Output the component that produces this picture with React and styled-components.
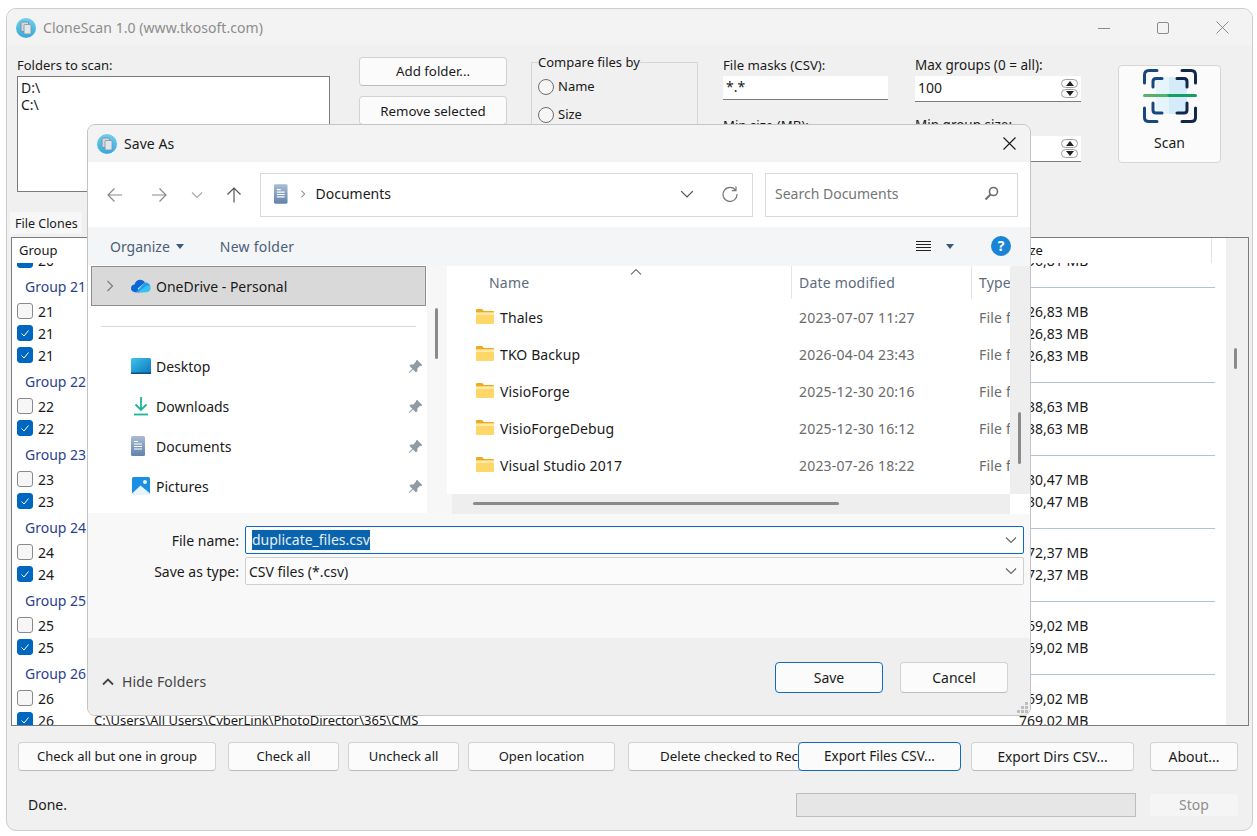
import React from 'react';
import styled, { createGlobalStyle } from 'styled-components';

const FONT = '"Noto Sans", "Open Sans", sans-serif';

const Global = createGlobalStyle`
  html, body { margin: 0; padding: 0; background: #fff; }
  body { font-family: ${FONT}; font-size: 14px; color: #1a1a1a; }
  * { box-sizing: border-box; }
`;

const Win = styled.div`
  position: relative;
  width: 1247px;
  height: 823px;
  margin: 8px 0 0 6px;
  border: 1px solid #cdcdcd;
  border-radius: 10px;
  background: #f0f0f0;
  overflow: hidden;
`;

const TitleBar = styled.div`
  display: flex;
  align-items: center;
  height: 37px;
  padding-left: 9px;
  background: #f3f3f3;
`;

const TitleText = styled.span`
  margin-left: 7px;
  letter-spacing: 0.06px;
  color: ${(p) => (p.$active ? '#1a1a1a' : '#8c8c8c')};
`;

const WinControls = styled.div`
  display: flex;
  align-items: center;
  margin-left: auto;
  padding-right: 23px;
  gap: 47px;
  color: #8a8a8a;
`;

const ConfigRow = styled.div`
  display: flex;
  align-items: flex-start;
  height: 166px;
  padding-left: 10px;
`;

const Column = styled.div`
  display: flex;
  flex-direction: column;
  width: ${(p) => p.$w}px;
  margin-left: ${(p) => p.$ml || 0}px;
  padding-top: 11px;
`;

const Label = styled.div`
  font-size: ${(p) => p.$fs || 13.2}px;
  line-height: 17px;
  height: 19px;
  white-space: nowrap;
`;

const FolderBox = styled.div`
  height: 116px;
  padding: 2px 3px;
  border: 1px solid #7c7c7c;
  background: #fff;
  line-height: 17px;
`;

const PushButton = styled.button`
  display: block;
  flex: none;
  width: ${(p) => p.$w}px;
  height: ${(p) => p.$h || 29}px;
  margin-left: ${(p) => p.$ml || 0}px;
  padding: 0 0 ${(p) => (p.$flush ? 0 : 1)}px;
  border: 1px solid ${(p) => (p.$focus ? '#0f6cbd' : '#d2d2d2')};
  border-bottom-color: ${(p) => (p.$focus ? '#0f6cbd' : '#bcbcbc')};
  border-radius: 4px;
  background: #fbfbfb;
  color: #1a1a1a;
  font-family: ${FONT};
  font-size: ${(p) => p.$fs || 13}px;
  white-space: nowrap;
  overflow: hidden;
  position: relative;
  z-index: ${(p) => (p.$focus ? 1 : 0)};
`;

const ButtonStack = styled(Column)`
  gap: 10px;
`;

const GroupBox = styled.fieldset`
  width: 167px;
  height: 136px;
  margin: 8px 0 0 24px;
  padding: 0 6px;
  border: 1px solid #d6d6d6;
  display: flex;
  flex-direction: column;
  gap: 10px;
  min-inline-size: 0;
  font-size: 13px;
  legend {
    padding: 0;
    line-height: 17px;
  }
`;

const RadioRow = styled.div`
  display: flex;
  align-items: center;
  gap: 4px;
  height: 18px;
  line-height: 16px;
  margin-top: ${(p) => p.$mt || 0}px;
`;

const RadioText = styled.span`
  margin-bottom: 2px;
`;

const Radio = styled.span`
  width: 16px;
  height: 16px;
  border-radius: 50%;
  border: 1px solid #6e6e6e;
  background: #f6f6f6;
`;

const MaskInput = styled.div`
  display: flex;
  align-items: center;
  justify-content: space-between;
  height: ${(p) => p.$h}px;
  padding: 0 3px 0 3px;
  background: #fff;
  border-bottom: 1px solid #7c7c7c;
  margin-bottom: ${(p) => p.$mb}px;
`;

const MaskValue = styled.span`
  margin-bottom: 2px;
`;

const Spin = styled.div`
  display: flex;
  flex-direction: column;
  gap: 1px;
`;

const SpinPart = styled.span`
  display: flex;
  align-items: center;
  justify-content: center;
  width: 17px;
  height: 9px;
  border: 1px solid #a0a0a0;
  border-radius: 5px;
  background: #fbfbfb;
`;

const ScanButton = styled.div`
  display: flex;
  flex-direction: column;
  align-items: center;
  width: 103px;
  height: 98px;
  margin: 19px 0 0 37px;
  padding-top: 3px;
  border: 1px solid #d6d6d6;
  border-radius: 4px;
  background: #fbfbfb;
  span {
    margin-top: 10px;
    line-height: 20px;
  }
`;

const TabBar = styled.div`
  height: 25px;
  padding-left: 3px;
`;

const Tab = styled.div`
  width: 72px;
  height: 22px;
  padding-left: 5px;
  font-size: 12.5px;
  line-height: 23px;
  background: #f7f7f7;
  white-space: nowrap;
`;

const ListFrame = styled.div`
  display: flex;
  width: 1238px;
  height: 489px;
  margin-left: 4px;
  border: 1px solid #7c7c7c;
  background: #fff;
`;

const ListMain = styled.div`
  flex: 1;
  display: flex;
  flex-direction: column;
  min-width: 0;
`;

const ListHead = styled.div`
  display: grid;
  grid-template-columns: 82px 925px 193px;
  flex: none;
  height: 25px;
  background: #fff;
  font-size: 13px;
  line-height: 25px;
  padding-top: 0;
`;

const HeadCell = styled.div`
  padding-left: ${(p) => p.$pl || 0}px;
  border-right: ${(p) => (p.$sep ? '1px solid #e4e4e4' : 'none')};
  white-space: nowrap;
`;

const ListViewport = styled.div`
  flex: 1;
  overflow: hidden;
`;

const FileRow = styled.div`
  display: grid;
  grid-template-columns: 82px 925px 1fr;
  align-items: center;
  height: 22px;
  margin-top: ${(p) => p.$mt || 0}px;
  white-space: nowrap;
`;

const PathCell = styled.div`
  font-size: 13px;
`;

const CheckCell = styled.div`
  display: flex;
  align-items: center;
  gap: 5px;
  padding-left: 5px;
`;

const CheckBox = styled.span`
  display: flex;
  align-items: center;
  justify-content: center;
  width: 16px;
  height: 16px;
  border-radius: 3px;
  border: 1px solid ${(p) => (p.$on ? '#0067c0' : '#8a8a8a')};
  background: ${(p) => (p.$on ? '#0067c0' : '#f6f6f6')};
`;

const GroupRow = styled.div`
  display: flex;
  align-items: center;
  height: 29px;
  padding: 3px 11px 0 13px;
  gap: 8px;
  color: #2b3f8c;
  white-space: nowrap;
  &::after {
    content: '';
    flex: 1;
    height: 1px;
    background: #b2c5d8;
  }
`;

const GroupName = styled.span`
  margin-bottom: 1px;
`;

const ListScroll = styled.div`
  flex: none;
  width: 22px;
  padding: 110px 0 0 8px;
  background: #f0f0f0;
  &::after {
    content: '';
    display: block;
    width: 3px;
    height: 21px;
    border-radius: 2px;
    background: #8a8a8a;
  }
`;

const ActionRow = styled.div`
  display: flex;
  height: 29px;
  margin-top: 16px;
  padding-left: 11px;
`;

const StatusRow = styled.div`
  display: flex;
  align-items: center;
  height: 24px;
  margin-top: 22px;
  padding-left: 21px;
`;

const StatusText = styled.span`
  margin-bottom: 2px;
`;

const Progress = styled.div`
  width: 340px;
  height: 24px;
  margin-left: auto;
  border: 1px solid #bcbcbc;
  background: #e6e6e6;
`;

const StopButton = styled.div`
  width: 88px;
  height: 22px;
  margin: 0 14px 0 14px;
  line-height: 22px;
  text-align: center;
  border-radius: 3px;
  background: #f5f5f5;
  color: #8f8f8f;
`;

/* the Save As dialog floats over the main window */
const Dialog = styled.div`
  position: absolute;
  left: 80px;
  top: 115px;
  width: 944px;
  height: 592px;
  border: 1px solid #c4c4c4;
  border-radius: 8px;
  background: #f0f0f0;
  overflow: hidden;
`;

const DialogClose = styled.span`
  display: flex;
  margin-left: auto;
  padding-right: 14px;
  color: #1a1a1a;
`;

const NavBar = styled.div`
  display: flex;
  align-items: center;
  height: 65px;
  padding-left: 19px;
  background: #fff;
  color: #8a8a8a;
`;

const NavIcon = styled.span`
  display: flex;
  flex: none;
  width: ${(p) => p.$w}px;
  margin-left: ${(p) => p.$ml || 0}px;
  color: ${(p) => p.$c || 'inherit'};
`;

const PathBox = styled.div`
  display: flex;
  align-items: center;
  flex: none;
  width: ${(p) => p.$w}px;
  height: 44px;
  margin-left: ${(p) => p.$ml}px;
  padding: 0 ${(p) => p.$pr}px 2px ${(p) => p.$pl}px;
  border: 1px solid #d9d9d9;
  background: #fff;
  color: #1a1a1a;
`;

const Crumb = styled.span`
  margin-left: 9px;
`;

const SearchHint = styled.span`
  color: #757575;
  flex: 1;
`;

const ToolStrip = styled.div`
  display: flex;
  align-items: center;
  height: 38px;
  padding-left: 22px;
  background: #f3f5f7;
  color: #4b6078;
`;

const NewFolder = styled.span`
  flex: none;
  width: 80px;
  margin-left: 36px;
  letter-spacing: 0.25px;
`;

const BodyGrid = styled.div`
  display: grid;
  grid-template-columns: 339px 20px 583px;
  height: 248px;
  background: #f7f7f7;
`;

const TreePane = styled.div`
  background: #fff;
  overflow: hidden;
`;

const TreeSelected = styled.div`
  display: flex;
  align-items: center;
  width: 335px;
  height: 40px;
  margin: 1px 0 0 3px;
  padding-left: 12px;
  background: #d9d9d9;
  border: 1px solid #8f8f8f;
`;

const TreeRule = styled.div`
  width: 315px;
  height: 1px;
  margin: 20px 0 19px 13px;
  background: #d9d9d9;
`;

const TreeRow = styled.div`
  display: flex;
  align-items: center;
  height: 40px;
  padding: 0 4px 0 43px;
`;

const TreeText = styled.span`
  margin-left: 5px;
`;

const PinMark = styled.span`
  display: flex;
  margin-left: auto;
`;

const TreeScroll = styled.div`
  padding: 43px 0 0 8px;
  &::after {
    content: '';
    display: block;
    width: 3px;
    height: 51px;
    border-radius: 2px;
    background: #8a8a8a;
  }
`;

const FilesPane = styled.div`
  display: grid;
  grid-template-columns: 563px 20px;
  grid-template-rows: 228px 20px;
  margin-top: 1px;
  height: 247px;
`;

const FilesMain = styled.div`
  position: relative;
  background: #fff;
  overflow: hidden;
`;

const FileGrid = styled.div`
  display: grid;
  grid-template-columns: 345px 180px 38px;
  align-items: center;
  height: ${(p) => p.$h}px;
`;

const ColHead = styled.div`
  height: 33px;
  line-height: 33px;
  padding-left: ${(p) => p.$pl}px;
  color: #5c6b7e;
  letter-spacing: 0.2px;
  border-right: ${(p) => (p.$sep ? '1px solid #e5e5e5' : 'none')};
  white-space: nowrap;
  overflow: hidden;
`;

const SortCaret = styled.span`
  position: absolute;
  left: 183px;
  top: 0;
  display: flex;
`;

const NameCell = styled.div`
  display: flex;
  align-items: center;
  gap: 6px;
  padding-left: 29px;
  letter-spacing: 0.1px;
  svg {
    margin-bottom: 3px;
  }
`;

const InfoCell = styled.div`
  padding-left: 7px;
  color: #6b6b6b;
  letter-spacing: 0.2px;
  white-space: nowrap;
  overflow: hidden;
`;

const VScroll = styled.div`
  padding: 146px 0 0 8px;
  background: #eeeeee;
  &::after {
    content: '';
    display: block;
    width: 3px;
    height: 52px;
    border-radius: 2px;
    background: #8a8a8a;
  }
`;

const HScroll = styled.div`
  margin-left: 5px;
  padding: 8px 0 0 21px;
  background: #eeeeee;
  &::after {
    content: '';
    display: block;
    width: 366px;
    height: 3px;
    border-radius: 2px;
    background: #8a8a8a;
  }
`;

const ScrollCorner = styled.div`
  background: #fff;
`;

const FormPanel = styled.div`
  display: grid;
  grid-template-columns: 151px 779px;
  grid-auto-rows: 28px;
  column-gap: 6px;
  row-gap: 3px;
  align-items: center;
  height: 125px;
  padding-top: 13px;
  background: #f8f8f8;
`;

const FormLabel = styled.div`
  text-align: right;
`;

const ComboField = styled.div`
  display: flex;
  align-items: center;
  justify-content: space-between;
  height: 28px;
  padding: 0 6px 0 ${(p) => p.$pl}px;
  border: 1px solid ${(p) => (p.$focus ? '#0f6cbd' : '#cfcfcf')};
  border-radius: 2px;
  background: ${(p) => (p.$focus ? '#fff' : '#fbfbfb')};
`;

const SelectedText = styled.span`
  background: #0a63ad;
  color: #e6eef6;
  line-height: 20px;
`;

const DialogFooter = styled.div`
  display: flex;
  align-items: flex-start;
  position: relative;
  height: 77px;
  padding: 24px 22px 0 14px;
  background: #efefef;
`;

const HideFolders = styled.div`
  display: flex;
  align-items: center;
  gap: 8px;
  height: 20px;
  line-height: 18px;
  margin: 10px auto 0 0;
  color: #444;
  letter-spacing: 0.15px;
`;

const FooterButtons = styled.div`
  display: flex;
  gap: 17px;
`;

const Grip = styled.span`
  position: absolute;
  right: 1px;
  bottom: 0;
  display: flex;
`;

const AppIcon = ({ id }) => (
  <svg width="20" height="20" viewBox="0 0 20 20">
    <defs>
      <linearGradient id={id} x1="0" y1="0" x2="0" y2="1">
        <stop offset="0" stopColor="#6fd0ee" />
        <stop offset="1" stopColor="#35a9dc" />
      </linearGradient>
    </defs>
    <circle cx="10" cy="10" r="10" fill={`url(#${id})`} />
    <rect x="5" y="4" width="7.5" height="9.5" rx="1" fill="#cfd9e0" stroke="#6f8594" strokeWidth="0.8" />
    <rect x="8" y="6.5" width="7" height="9.5" rx="1" fill="#dfe7ec" stroke="#7d92a0" strokeWidth="0.8" />
  </svg>
);

const ScanIcon = () => (
  <svg width="54" height="54" viewBox="0 0 54 54" fill="none" strokeWidth="3" strokeLinecap="round">
    <rect x="13" y="8" width="13" height="37" fill="#e6f4fb" />
    <rect x="26" y="8" width="18" height="37" fill="#d4ecf9" />
    <g stroke="#17477f">
      <path d="M1.5 14V6Q1.5 1.5 6 1.5H14" />
      <path d="M10 18V12.5Q10 9.5 13 9.5H19" />
      <path d="M1.5 39V48.5Q1.5 52.5 6 52.5H14" />
      <path d="M10 34V41Q10 44 13 44H19" />
    </g>
    <g stroke="#12274a">
      <path d="M39 1.5H48Q52.5 1.5 52.5 6V14" />
      <path d="M34 9.5H41Q44 9.5 44 12.5V18" />
      <path d="M39 52.5H48Q52.5 52.5 52.5 48.5V39" />
      <path d="M34 44H41Q44 44 44 41V34" />
    </g>
    <path d="M1.5 26.5H26" stroke="#55b368" />
    <path d="M26 26.5H52.5" stroke="#10a060" />
  </svg>
);

const FolderIcon = () => (
  <svg width="18" height="15" viewBox="0 0 18 15">
    <path d="M0 1.2Q0 0 1.2 0H6L8 2H17Q18 2 18 3V5H0Z" fill="#eeaa1f" />
    <path d="M0 3.5H18V14Q18 15 17 15H1Q0 15 0 14Z" fill="#ffd768" />
    <path d="M0 3.5H18V6H0Z" fill="#ffe9a8" />
  </svg>
);

const PinIcon = () => (
  <svg width="15" height="15" viewBox="0 0 15 15" fill="#8e9aa4">
    <path d="M9 0.8L14.2 6L13 7.2L12 6.8L9.4 9.4L9.4 12L8 13.4L5 10.4L1.5 13.9L0.8 13.2L4.3 9.7L1.4 6.8L2.8 5.4H5.4L8 2.8L7.8 2Z" />
  </svg>
);

const DocIcon = () => (
  <svg width="14" height="20" viewBox="0 0 14 20">
    <defs>
      <linearGradient id="docfill" x1="0" y1="0" x2="0" y2="1">
        <stop offset="0" stopColor="#a9bcd3" />
        <stop offset="1" stopColor="#6283ab" />
      </linearGradient>
    </defs>
    <rect width="14" height="20" rx="1.5" fill="url(#docfill)" />
    <path d="M3 5.5H7M3 8H11M3 10.5H11M3 13H11" stroke="#fff" strokeWidth="1.2" />
  </svg>
);

const DesktopIcon = () => (
  <svg width="20" height="16" viewBox="0 0 20 16">
    <defs>
      <linearGradient id="deskfill" x1="0" y1="0" x2="1" y2="1">
        <stop offset="0" stopColor="#3cc3ec" />
        <stop offset="1" stopColor="#0d76ba" />
      </linearGradient>
    </defs>
    <rect width="20" height="16" rx="1.5" fill="url(#deskfill)" />
    <rect y="14.5" width="20" height="1.5" fill="#0b4f86" />
  </svg>
);

const DownloadIcon = () => (
  <svg width="20" height="20" viewBox="0 0 20 20" fill="none" stroke="#1fb39b" strokeWidth="1.8">
    <path d="M10 1V14M4.5 8.5L10 14L15.5 8.5" />
    <path d="M3 18.5H17" />
  </svg>
);

const PictureIcon = () => (
  <svg width="20" height="18" viewBox="0 0 20 18">
    <rect y="0" width="18" height="18" x="1" rx="1.5" fill="#1a8fe3" />
    <circle cx="14" cy="5" r="2" fill="#e8f4fd" />
    <path d="M1 16.5L9.5 8.5L19 16.5V18H1Z" fill="#e8f4fd" />
  </svg>
);

const CloudIcon = () => (
  <svg width="20" height="14" viewBox="0 0 21 14">
    <path d="M4.5 13.5C1.5 13.5 0 11.5 0 9.4C0 7 1.8 5.6 3.7 5.4C4.5 2.4 6.8 0.5 9.6 0.5C11.8 0.5 13.6 1.6 14.6 3.4L7 9.5L9 13.5Z" fill="#0b66d6" />
    <path d="M14.6 3.4C18 3.2 20 5.2 20.3 7.6L13 13.5H4.5C7 12.5 9 9 14.6 3.4Z" fill="#1f9cf0" />
    <path d="M20.3 7.5C21.3 9.8 19.8 13.5 16.6 13.5H7.4C10 11.5 14 8 16.4 6.8C18 6.2 19.5 6.6 20.3 7.5Z" fill="#39c0f5" />
  </svg>
);

const Chevron = ({ size = 12, dir = 'down', color = 'currentColor', w = 1.1 }) => {
  const d = {
    down: 'M1 3.5L6 8.5L11 3.5',
    up: 'M1 8.5L6 3.5L11 8.5',
    right: 'M3.5 1L8.5 6L3.5 11',
  }[dir];
  return (
    <svg width={size} height={size} viewBox="0 0 12 12" fill="none" stroke={color} strokeWidth={w}>
      <path d={d} />
    </svg>
  );
};

const Arrow = ({ dir }) => {
  const d = {
    left: 'M15 8H1M7.5 1.5L1 8L7.5 14.5',
    right: 'M0 8H14M7.5 1.5L14 8L7.5 14.5',
    up: 'M8 15.5V1M1.5 7.5L8 1L14.5 7.5',
  }[dir];
  return (
    <svg width="16" height="16" viewBox="0 0 16 16" fill="none" stroke="currentColor" strokeWidth="1.2">
      <path d={d} />
    </svg>
  );
};

const Caret = ({ up, color = '#222' }) => (
  <svg width="8" height="5" viewBox="0 0 8 5" fill={color}>
    <path d={up ? 'M0 5L4 0L8 5Z' : 'M0 0H8L4 5Z'} />
  </svg>
);

const CheckMark = () => (
  <svg width="10" height="10" viewBox="0 0 10 10" fill="none" stroke="#fff" strokeWidth="1">
    <path d="M1.5 5.5L4 8L8.5 2.5" />
  </svg>
);

const groups = [
  { n: 21, size: '726,83 MB', items: [false, true, true] },
  { n: 22, size: '738,63 MB', items: [false, true] },
  { n: 23, size: '730,47 MB', items: [false, true] },
  { n: 24, size: '772,37 MB', items: [false, true] },
  { n: 25, size: '769,02 MB', items: [false, true] },
  { n: 26, size: '769,02 MB', items: [false, true] },
];

const folders = [
  ['Thales', '2023-07-07 11:27'],
  ['TKO Backup', '2026-04-04 23:43'],
  ['VisioForge', '2025-12-30 20:16'],
  ['VisioForgeDebug', '2025-12-30 16:12'],
  ['Visual Studio 2017', '2023-07-26 18:22'],
];

const places = [
  ['Desktop', <DesktopIcon />],
  ['Downloads', <DownloadIcon />],
  ['Documents', <DocIcon />],
  ['Pictures', <PictureIcon />],
];

const LAST_PATH = 'C:\\Users\\All Users\\CyberLink\\PhotoDirector\\365\\CMS';

const Row = ({ label, on, size, path, mt }) => (
  <FileRow $mt={mt}>
    <CheckCell>
      <CheckBox $on={on}>{on && <CheckMark />}</CheckBox>
      {label}
    </CheckCell>
    <PathCell>{path}</PathCell>
    <div>{size}</div>
  </FileRow>
);

const Spinner = () => (
  <Spin>
    <SpinPart><Caret up /></SpinPart>
    <SpinPart><Caret /></SpinPart>
  </Spin>
);

export default function App() {
  return (
    <>
      <Global />
      <Win>
        <TitleBar>
          <AppIcon id="appicon" />
          <TitleText>CloneScan 1.0 (www.tkosoft.com)</TitleText>
          <WinControls>
            <svg width="12" height="12" viewBox="0 0 12 12" stroke="currentColor"><path d="M0 6.5H12" /></svg>
            <svg width="12" height="12" viewBox="0 0 12 12" fill="none" stroke="currentColor"><rect x="0.5" y="0.5" width="11" height="11" rx="1.5" /></svg>
            <svg width="13" height="13" viewBox="0 0 13 13" stroke="currentColor"><path d="M0.5 0.5L12.5 12.5M12.5 0.5L0.5 12.5" /></svg>
          </WinControls>
        </TitleBar>

        <ConfigRow>
          <Column $w={313}>
            <Label $fs={13}>Folders to scan:</Label>
            <FolderBox>D:\<br />C:\</FolderBox>
          </Column>
          <ButtonStack $w={148} $ml={29}>
            <PushButton $w={148} $fs={13.3}>Add folder...</PushButton>
            <PushButton $w={148} $fs={13.3} $flush>Remove selected</PushButton>
          </ButtonStack>
          <GroupBox>
            <legend>Compare files by</legend>
            <RadioRow $mt={7}><Radio /><RadioText>Name</RadioText></RadioRow>
            <RadioRow><Radio /><RadioText>Size</RadioText></RadioRow>
          </GroupBox>
          <Column $w={165} $ml={25}>
            <Label>File masks (CSV):</Label>
            <MaskInput $h={24} $mb={17}><MaskValue>*.*</MaskValue></MaskInput>
            <Label>Min size (MB):</Label>
          </Column>
          <Column $w={166} $ml={27}>
            <Label $fs={13.5}>Max groups (0 = all):</Label>
            <MaskInput $h={26} $mb={15}><MaskValue>100</MaskValue><Spinner /></MaskInput>
            <Label $fs={13.5}>Min group size:</Label>
            <MaskInput $h={26} $mb={0}><span />
              <Spinner />
            </MaskInput>
          </Column>
          <ScanButton>
            <ScanIcon />
            <span>Scan</span>
          </ScanButton>
        </ConfigRow>

        <TabBar><Tab>File Clones</Tab></TabBar>

        <ListFrame>
          <ListMain>
            <ListHead>
              <HeadCell $pl={7}>Group</HeadCell>
              <HeadCell />
              <HeadCell $sep>Size</HeadCell>
            </ListHead>
            <ListViewport>
              <Row label="20" on size="796,81 MB" mt={-14} />
              {groups.map((g) => (
                <React.Fragment key={g.n}>
                  <GroupRow><GroupName>Group {g.n}</GroupName></GroupRow>
                  {g.items.map((on, i) => (
                    <Row
                      key={i}
                      label={g.n}
                      on={on}
                      size={g.size}
                      path={g.n === 26 && on ? LAST_PATH : null}
                    />
                  ))}
                </React.Fragment>
              ))}
            </ListViewport>
          </ListMain>
          <ListScroll />
        </ListFrame>

        <ActionRow>
          <PushButton $w={198}>Check all but one in group</PushButton>
          <PushButton $w={111} $ml={12}>Check all</PushButton>
          <PushButton $w={111} $ml={9}>Uncheck all</PushButton>
          <PushButton $w={147} $ml={9}>Open location</PushButton>
          <PushButton $w={250} $ml={13} $fs={13.4}>Delete checked to Recycle Bin</PushButton>
          <PushButton $w={163} $ml={-80} $focus $fs={13.5}>Export Files CSV...</PushButton>
          <PushButton $w={163} $ml={10} $fs={13.75}>Export Dirs CSV...</PushButton>
          <PushButton $w={88} $ml={16} $fs={14}>About...</PushButton>
        </ActionRow>

        <StatusRow>
          <StatusText>Done.</StatusText>
          <Progress />
          <StopButton>Stop</StopButton>
        </StatusRow>

        <Dialog>
          <TitleBar>
            <AppIcon id="dlgicon" />
            <TitleText $active>Save As</TitleText>
            <DialogClose>
              <svg width="13" height="13" viewBox="0 0 13 13" stroke="currentColor" strokeWidth="1.1"><path d="M0.5 0.5L12.5 12.5M12.5 0.5L0.5 12.5" /></svg>
            </DialogClose>
          </TitleBar>

          <NavBar>
            <NavIcon $w={16}><Arrow dir="left" /></NavIcon>
            <NavIcon $w={16} $ml={29}><Arrow dir="right" /></NavIcon>
            <NavIcon $w={12} $ml={23} $c="#a8a8a8"><Chevron /></NavIcon>
            <NavIcon $w={16} $ml={23} $c="#555"><Arrow dir="up" /></NavIcon>
            <PathBox $w={493} $ml={18} $pl={13} $pr={14}>
              <DocIcon />
              <NavIcon $w={8} $ml={11} $c="#666"><Chevron size={8} dir="right" w={1.5} /></NavIcon>
              <Crumb>Documents</Crumb>
              <NavIcon $w={14} $ml={289} $c="#555"><Chevron size={14} /></NavIcon>
              <NavIcon $w={16} $ml={28} $c="#777">
                <svg width="16" height="16" viewBox="0 0 16 16" fill="none" stroke="currentColor" strokeWidth="1.2">
                  <path d="M13.8 4.5A7 7 0 1 0 15 8M14 0.5V4.7H9.8" />
                </svg>
              </NavIcon>
            </PathBox>
            <PathBox $w={253} $ml={12} $pl={9} $pr={18}>
              <SearchHint>Search Documents</SearchHint>
              <NavIcon $w={15} $c="#6e6e6e">
                <svg width="15" height="15" viewBox="0 0 15 15" fill="none" stroke="currentColor" strokeWidth="1.6">
                  <circle cx="9.5" cy="5.5" r="4" />
                  <path d="M6.5 8.5L1.5 13.5" strokeWidth="2" />
                </svg>
              </NavIcon>
            </PathBox>
          </NavBar>

          <ToolStrip>
            Organize
            <NavIcon $w={8} $ml={6}><Caret color="#3d5a7a" /></NavIcon>
            <NewFolder>New folder</NewFolder>
            <NavIcon $w={15} $ml={616} $c="#222">
              <svg width="15" height="13" viewBox="0 0 15 13" stroke="currentColor"><path d="M0 1.5H15M0 4.5H15M0 7.5H15M0 10.5H15" /></svg>
            </NavIcon>
            <NavIcon $w={8} $ml={15}><Caret color="#3d5a7a" /></NavIcon>
            <NavIcon $w={20} $ml={37}>
              <svg width="20" height="20" viewBox="0 0 20 20">
                <circle cx="10" cy="10" r="10" fill="#1a85d6" />
                <text x="10" y="15" textAnchor="middle" fontSize="14" fontWeight="700" fontFamily="Noto Sans, sans-serif" fill="#fff">?</text>
              </svg>
            </NavIcon>
          </ToolStrip>

          <BodyGrid>
            <TreePane>
              <TreeSelected>
                <NavIcon $w={12} $c="#777"><Chevron dir="right" /></NavIcon>
                <NavIcon $w={20} $ml={15}><CloudIcon /></NavIcon>
                <TreeText>OneDrive - Personal</TreeText>
              </TreeSelected>
              <TreeRule />
              {places.map(([name, icon]) => (
                <TreeRow key={name}>
                  <NavIcon $w={20}>{icon}</NavIcon>
                  <TreeText>{name}</TreeText>
                  <PinMark><PinIcon /></PinMark>
                </TreeRow>
              ))}
            </TreePane>
            <TreeScroll />
            <FilesPane>
              <FilesMain>
                <SortCaret><Chevron dir="up" color="#777" /></SortCaret>
                <FileGrid $h={33}>
                  <ColHead $pl={42} $sep>Name</ColHead>
                  <ColHead $pl={7} $sep>Date modified</ColHead>
                  <ColHead $pl={7}>Type</ColHead>
                </FileGrid>
                {folders.map(([name, date]) => (
                  <FileGrid $h={37} key={name}>
                    <NameCell><FolderIcon />{name}</NameCell>
                    <InfoCell>{date}</InfoCell>
                    <InfoCell>File folder</InfoCell>
                  </FileGrid>
                ))}
              </FilesMain>
              <VScroll />
              <HScroll />
              <ScrollCorner />
            </FilesPane>
          </BodyGrid>

          <FormPanel>
            <FormLabel>File name:</FormLabel>
            <ComboField $focus $pl={6}>
              <SelectedText>duplicate_files.csv</SelectedText>
              <NavIcon $w={12} $c="#666"><Chevron /></NavIcon>
            </ComboField>
            <FormLabel>Save as type:</FormLabel>
            <ComboField $pl={3}>
              CSV files (*.csv)
              <NavIcon $w={12} $c="#666"><Chevron /></NavIcon>
            </ComboField>
          </FormPanel>

          <DialogFooter>
            <HideFolders>
              <Chevron dir="up" color="#444" w={1.8} />
              Hide Folders
            </HideFolders>
            <FooterButtons>
              <PushButton $w={108} $h={31} $fs={14} $focus>Save</PushButton>
              <PushButton $w={108} $h={31} $fs={14}>Cancel</PushButton>
            </FooterButtons>
            <Grip>
              <svg width="13" height="13" viewBox="0 0 13 13" fill="#bdbdbd">
                <path d="M9 0h3v3H9zM5 4h3v3H5zM9 4h3v3H9zM1 8h3v3H1zM5 8h3v3H5zM9 8h3v3H9z" />
              </svg>
            </Grip>
          </DialogFooter>
        </Dialog>
      </Win>
    </>
  );
}
